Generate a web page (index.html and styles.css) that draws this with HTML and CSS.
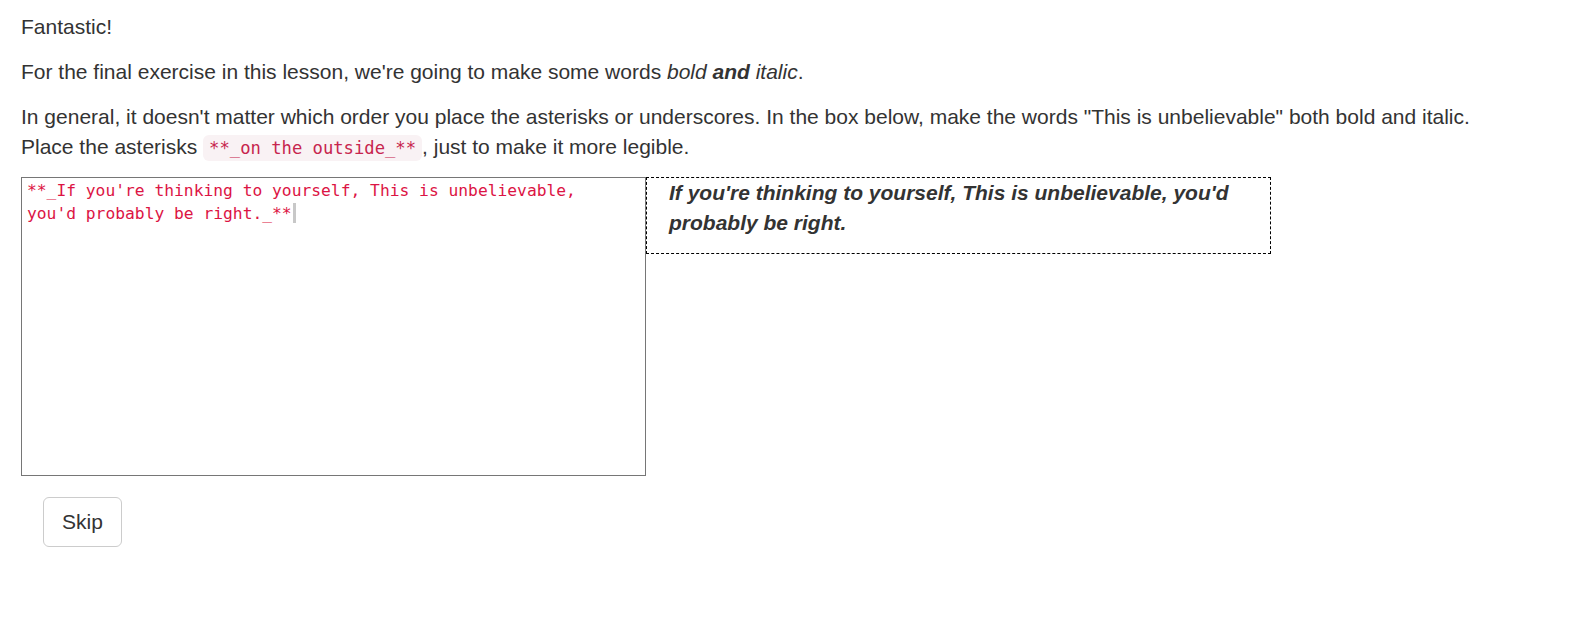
FILE: index.html
```html
<!DOCTYPE html>
<html>
<head>
<meta charset="utf-8">
<title>Lesson</title>
<link rel="stylesheet" href="styles.css">
</head>
<body>
<div class="page">
  <p>Fantastic!</p>
  <p>For the final exercise in this lesson, we're going to make some words <em>bold <strong>and</strong> italic</em>.</p>
  <p>In general, it doesn't matter which order you place the asterisks or underscores. In the box below, make the words "This is unbelievable" both bold and italic. Place the asterisks <code>**_on the outside_**</code>, just to make it more legible.</p>
  <div class="editor">
    <div class="input" role="textbox">**_If you're thinking to yourself, This is unbelievable,
you'd probably be right._**<span class="caret"></span></div>
    <div class="preview">
      <p><strong><em>If you're thinking to yourself, This is unbelievable, you'd probably be right.</em></strong></p>
    </div>
  </div>
  <div class="actions">
    <button class="btn">Skip</button>
  </div>
</div>
</body>
</html>
```
FILE: styles.css
```css
html, body {
  margin: 0;
  padding: 0;
  background: #fff;
}
body {
  font-family: "Liberation Sans", Arial, sans-serif;
  font-size: 21px;
  line-height: 30px;
  color: #333;
}
.page {
  max-width: 1480px;
  padding: 12px 21px 0 21px;
}
p {
  margin: 0 0 15px 0;
}
code {
  font-family: "DejaVu Sans Mono", "Liberation Mono", monospace;
  font-size: 17.2px;
  line-height: 1;
  color: #c7254e;
  background: #f9f2f4;
  border-radius: 6px;
  padding: 3px 6px;
}
.editor {
  display: flex;
  align-items: flex-start;
}
.input {
  box-sizing: border-box;
  width: 625px;
  height: 299px;
  border: 1px solid #767676;
  padding: 1px 5px;
  font-family: "DejaVu Sans Mono", "Liberation Mono", monospace;
  font-size: 16.3px;
  line-height: 23px;
  color: #dc1444;
  white-space: pre-wrap;
}
.caret {
  display: inline-block;
  width: 3px;
  height: 20px;
  background: #c8c8c8;
  vertical-align: -4px;
  margin-left: 1px;
}
.preview {
  box-sizing: border-box;
  width: 625px;
  border: 1px dashed #000;
  padding: 0 22px;
}
.preview p {
  margin: 0 0 15px 0;
}
.actions {
  padding: 21px 22px 0 22px;
}
.btn {
  font-family: "Liberation Sans", Arial, sans-serif;
  font-size: 21px;
  line-height: 30px;
  color: #333;
  background: #fff;
  border: 1px solid #ccc;
  border-radius: 6px;
  padding: 9px 18px;
  cursor: pointer;
}
```
